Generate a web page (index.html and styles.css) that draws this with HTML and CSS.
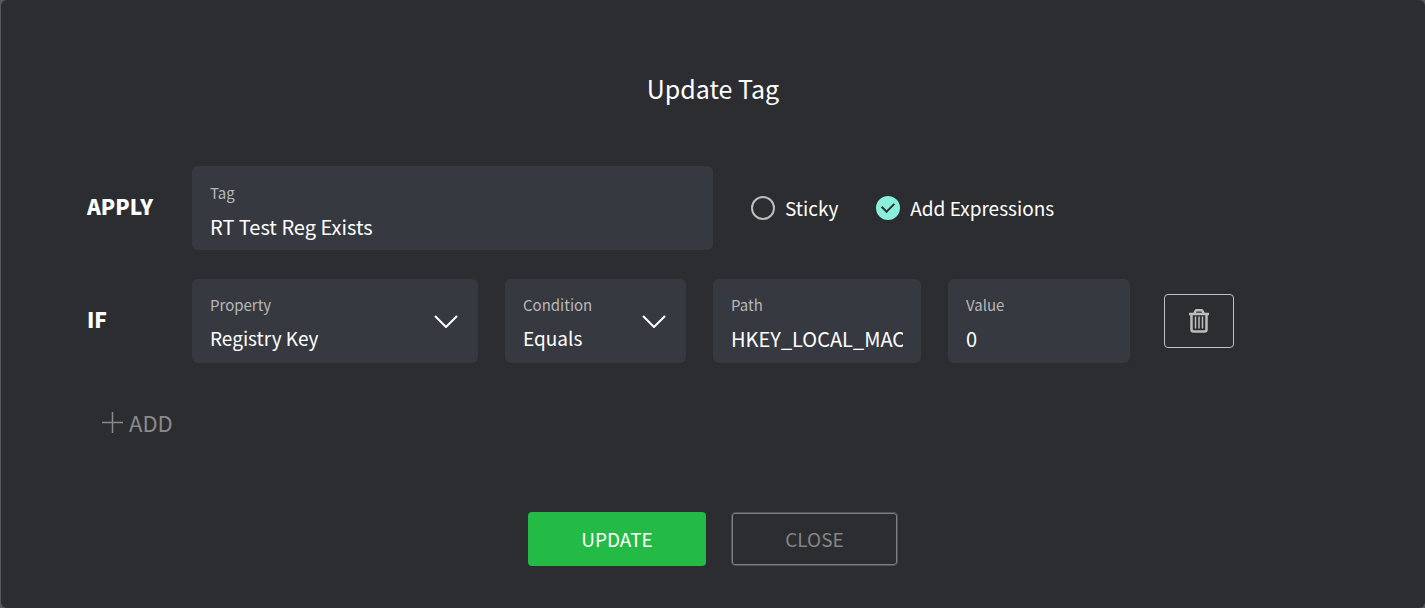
FILE: index.html
```html
<!DOCTYPE html>
<html lang="en">
<head>
<meta charset="utf-8">
<title>Update Tag</title>
<link rel="stylesheet" href="styles.css">
</head>
<body>
<main class="dialog">
  <h1 class="title">Update Tag</h1>
  <form class="form">
    <div class="row">
      <span class="row-label">APPLY</span>
      <div class="row-body">
        <div class="field field-tag">
          <label class="field-label" for="tag">Tag</label>
          <input class="field-control" id="tag" type="text" value="RT Test Reg Exists">
        </div>
        <div class="options">
          <label class="option"><input class="tick" type="checkbox">Sticky</label>
          <label class="option"><input class="tick" type="checkbox" checked>Add Expressions</label>
        </div>
      </div>
    </div>
    <div class="row">
      <span class="row-label">IF</span>
      <div class="row-body">
        <div class="fields">
          <div class="field">
            <label class="field-label" for="property">Property</label>
            <select class="field-control field-select" id="property"><option>Registry Key</option></select>
            <svg class="chevron" viewBox="0 0 24 13" aria-hidden="true"><path d="M1 1l11 11L23 1"/></svg>
          </div>
          <div class="field">
            <label class="field-label" for="condition">Condition</label>
            <select class="field-control field-select" id="condition"><option>Equals</option></select>
            <svg class="chevron" viewBox="0 0 24 13" aria-hidden="true"><path d="M1 1l11 11L23 1"/></svg>
          </div>
          <div class="field">
            <label class="field-label" for="path">Path</label>
            <input class="field-control" id="path" type="text" value="HKEY_LOCAL_MACHINE">
          </div>
          <div class="field">
            <label class="field-label" for="value">Value</label>
            <input class="field-control" id="value" type="text" value="0">
          </div>
        </div>
        <button class="delete" type="button" aria-label="Delete expression">
          <svg class="trash" viewBox="0 0 20 24" aria-hidden="true">
            <path class="trash-body" d="M2.500 5v15.500a2 2 0 0 0 2 2h11a2 2 0 0 0 2-2V5M0 5h20M5 5l1.500-3q.4-.8 1.500-.8h4q1.100 0 1.500.8L15 5"/>
            <path class="trash-bars" d="M6.500 7.500v12M10 7.500v12M13.500 7.500v12"/>
          </svg>
        </button>
      </div>
    </div>
    <button class="add" type="button">
      <svg class="plus" viewBox="0 0 21 21" aria-hidden="true"><path d="M10.500 0v21M0 10.500h21"/></svg>ADD
    </button>
    <div class="actions">
      <button class="button button-update" type="submit">UPDATE</button>
      <button class="button button-close" type="button">CLOSE</button>
    </div>
  </form>
</main>
</body>
</html>
```

FILE: styles.css
```css
* {
  box-sizing: border-box;
}

body {
  margin: 0;
  background: #55575b;
  color: #fff;
  font-family: "Noto Sans CJK JP", "Noto Sans", sans-serif;
  font-size: 20px;
  line-height: 32px;
}

button,
input,
select {
  font: inherit;
  color: inherit;
}

button {
  cursor: pointer;
}

.dialog {
  min-height: 100vh;
  margin-left: 1px;
  padding-top: 68px;
  padding-bottom: 42px;
  border-radius: 6px;
  background: #2c2d31;
}

.title {
  margin: 0 0 58px;
  font-size: 25px;
  font-weight: 400;
  line-height: 40px;
  text-align: center;
}

.row {
  display: flex;
  align-items: center;
  margin: 0 191px 29px 86px;
}

.row-label {
  flex: 0 0 105px;
  padding-bottom: 4px;
  font-size: 21px;
  font-weight: 900;
}

.row-body {
  display: flex;
  flex: 1;
  align-items: center;
  min-width: 0;
}

.field {
  position: relative;
  display: flex;
  flex-direction: column;
  gap: 3px;
  min-width: 0;
  padding: 15px 18px 6px;
  border-radius: 6px;
  background: #373941;
}

.field-tag {
  flex: 0 0 50%;
}

.fields {
  display: grid;
  grid-template-columns: 286fr 181fr 208fr 182fr;
  flex: 1;
  gap: 27px;
  min-width: 0;
}

.fields .field {
  padding-top: 14px;
  padding-bottom: 7px;
}

.field-label {
  color: #b8b8b8;
  font-size: 15px;
  line-height: 24px;
}

.field-control {
  width: 100%;
  height: 36px;
  padding: 0;
  border: 0;
  outline: 0;
  background: transparent;
  appearance: none;
}

.field-select {
  font-size: 19px;
}

.chevron {
  position: absolute;
  top: 36px;
  right: 20px;
  width: 24px;
  height: 13px;
  fill: none;
  stroke: #fff;
  stroke-width: 2;
  pointer-events: none;
}

.options {
  display: flex;
  gap: 38px;
  margin-left: 38px;
  padding-bottom: 1px;
  font-size: 19px;
  white-space: nowrap;
}

.option {
  display: flex;
  align-items: center;
  gap: 10px;
}

.tick {
  width: 24px;
  height: 24px;
  margin: 0;
  border: 2px solid #bdbdbd;
  border-radius: 50%;
  appearance: none;
}

.tick:checked {
  display: grid;
  place-items: center;
  border-color: #8af0dc;
  background: #8af0dc;
}

.tick:checked::after {
  width: 10px;
  height: 6px;
  margin-bottom: 3px;
  border: solid #2c2d31;
  border-width: 0 0 2px 2px;
  content: "";
  transform: rotate(-45deg);
}

.delete {
  display: grid;
  place-items: center;
  width: 70px;
  height: 54px;
  margin-left: 34px;
  padding: 0;
  border: 1px solid #c0c0c0;
  border-radius: 4px;
  background: transparent;
}

.trash {
  width: 20px;
  height: 24px;
  fill: none;
  stroke: #bdbdbd;
}

.trash-body {
  stroke-width: 2.5;
}

.trash-bars {
  stroke-width: 1.5;
}

.add {
  display: flex;
  align-items: center;
  gap: 6px;
  margin: 43px 0 74px 101px;
  padding: 0;
  border: 0;
  background: transparent;
  color: #8b8b8b;
  font-size: 22px;
}

.plus {
  width: 21px;
  height: 21px;
  fill: none;
  stroke: #8b8b8b;
  stroke-width: 1.5;
}

.actions {
  display: flex;
  justify-content: center;
  align-items: center;
  gap: 25px;
}

.button {
  height: 54px;
  padding-bottom: 2px;
  border-radius: 4px;
  font-size: 19px;
}

.button-update {
  width: 178px;
  border: 0;
  background: #23bb46;
}

.button-close {
  width: 167px;
  border: 1px solid #505155;
  background: transparent;
  box-shadow: inset 0 0 0 1px #808083;
  color: #858585;
}
```
